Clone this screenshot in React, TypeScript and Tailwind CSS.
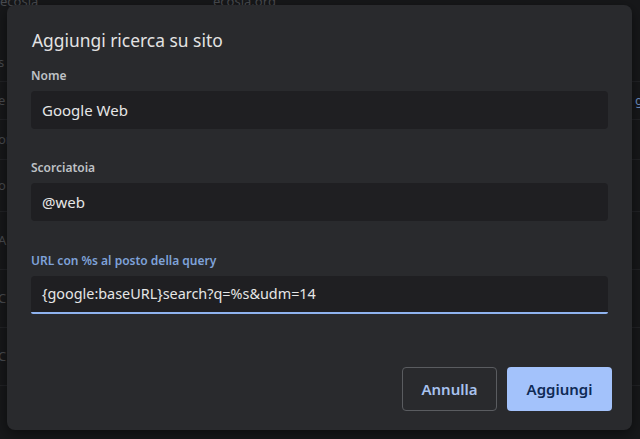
import React from 'react';

const font = { fontFamily: '"Noto Sans", "Open Sans", sans-serif' };

// faint rows of the settings page behind the modal
const rows = [
  { y: 'h-[38px]', left: 's', right: '' },
  { y: 'h-[38px]', left: 'e', right: 'g' },
  { y: 'h-[40px]', left: 'or', right: '' },
  { y: 'h-[52px]', left: 'o c', right: '' },
  { y: 'h-[58px]', left: 'A', right: '' },
  { y: 'h-[58px]', left: 'C', right: '' },
  { y: 'h-[58px]', left: 'C', right: '' },
];

function Field({ label, value, focused }: { label: string; value: string; focused?: boolean }) {
  return (
    <div className="flex flex-col">
      <label className={`text-[12px] leading-[16px] font-semibold ${focused ? 'text-[#7fa2d9]' : 'text-[#bfc2c6]'}`}>
        {label}
      </label>
      <div
        className={`mt-[7px] h-[38px] flex items-center px-[11px] bg-[#1f1f22] rounded-t-[4px] ${
          focused ? 'border-b-2 border-[#8fb3ef] rounded-b-[2px]' : 'rounded-b-[4px]'
        }`}
      >
        <span className={`${focused ? 'text-[14.4px]' : 'text-[15px]'} text-[#e6e6e6]`}>{value}</span>
      </div>
    </div>
  );
}

export default function App() {
  return (
    <div className="relative w-[640px] h-[439px] overflow-hidden bg-[#17181a]" style={font}>
      {/* page behind */}
      <div className="flex flex-col text-[13px] text-[#4a4c50]">
        <div className="h-[52px] flex items-start -mt-[8px]">
          <span className="w-[213px]">ecosia</span>
          <span>ecosia.org</span>
        </div>
        {rows.map((r, i) => (
          <div key={i} className={`${r.y} flex items-center justify-between border-b border-[#222326]`}>
            <span className="-ml-[2px]">{r.left}</span>
            <span className="text-[#6d8fc4] -mr-[3px]">{r.right}</span>
          </div>
        ))}
      </div>

      {/* modal */}
      <div className="absolute left-[7px] top-[5px] w-[625px] h-[425px] rounded-[8px] bg-[#292a2d] shadow-[0_4px_14px_rgba(0,0,0,0.5)] flex flex-col px-[24px] pt-[23px]">
        <h2 className="text-[17.4px] leading-[24px] text-[#e3e3e3] pl-[1px]">Aggiungi ricerca su sito</h2>
        <div className="mt-[16px] flex flex-col gap-[31px]">
          <Field label="Nome" value="Google Web" />
          <Field label="Scorciatoia" value="@web" />
          <div className="-mt-[1px] pt-[2px]">
            <Field label="URL con %s al posto della query" value="{google:baseURL}search?q=%s&udm=14" focused />
          </div>
        </div>
        <div className="mt-auto mb-[19px] flex justify-end gap-[10px] -mr-[4px]">
          <button className="w-[95px] h-[44px] rounded-[4px] border border-[#5a5c60] text-[15px] font-semibold text-[#a8c2ee]">
            Annulla
          </button>
          <button className="w-[105px] h-[44px] rounded-[4px] bg-[#a3c2fb] text-[15px] font-semibold text-[#0f2a55]">
            Aggiungi
          </button>
        </div>
      </div>
    </div>
  );
}
